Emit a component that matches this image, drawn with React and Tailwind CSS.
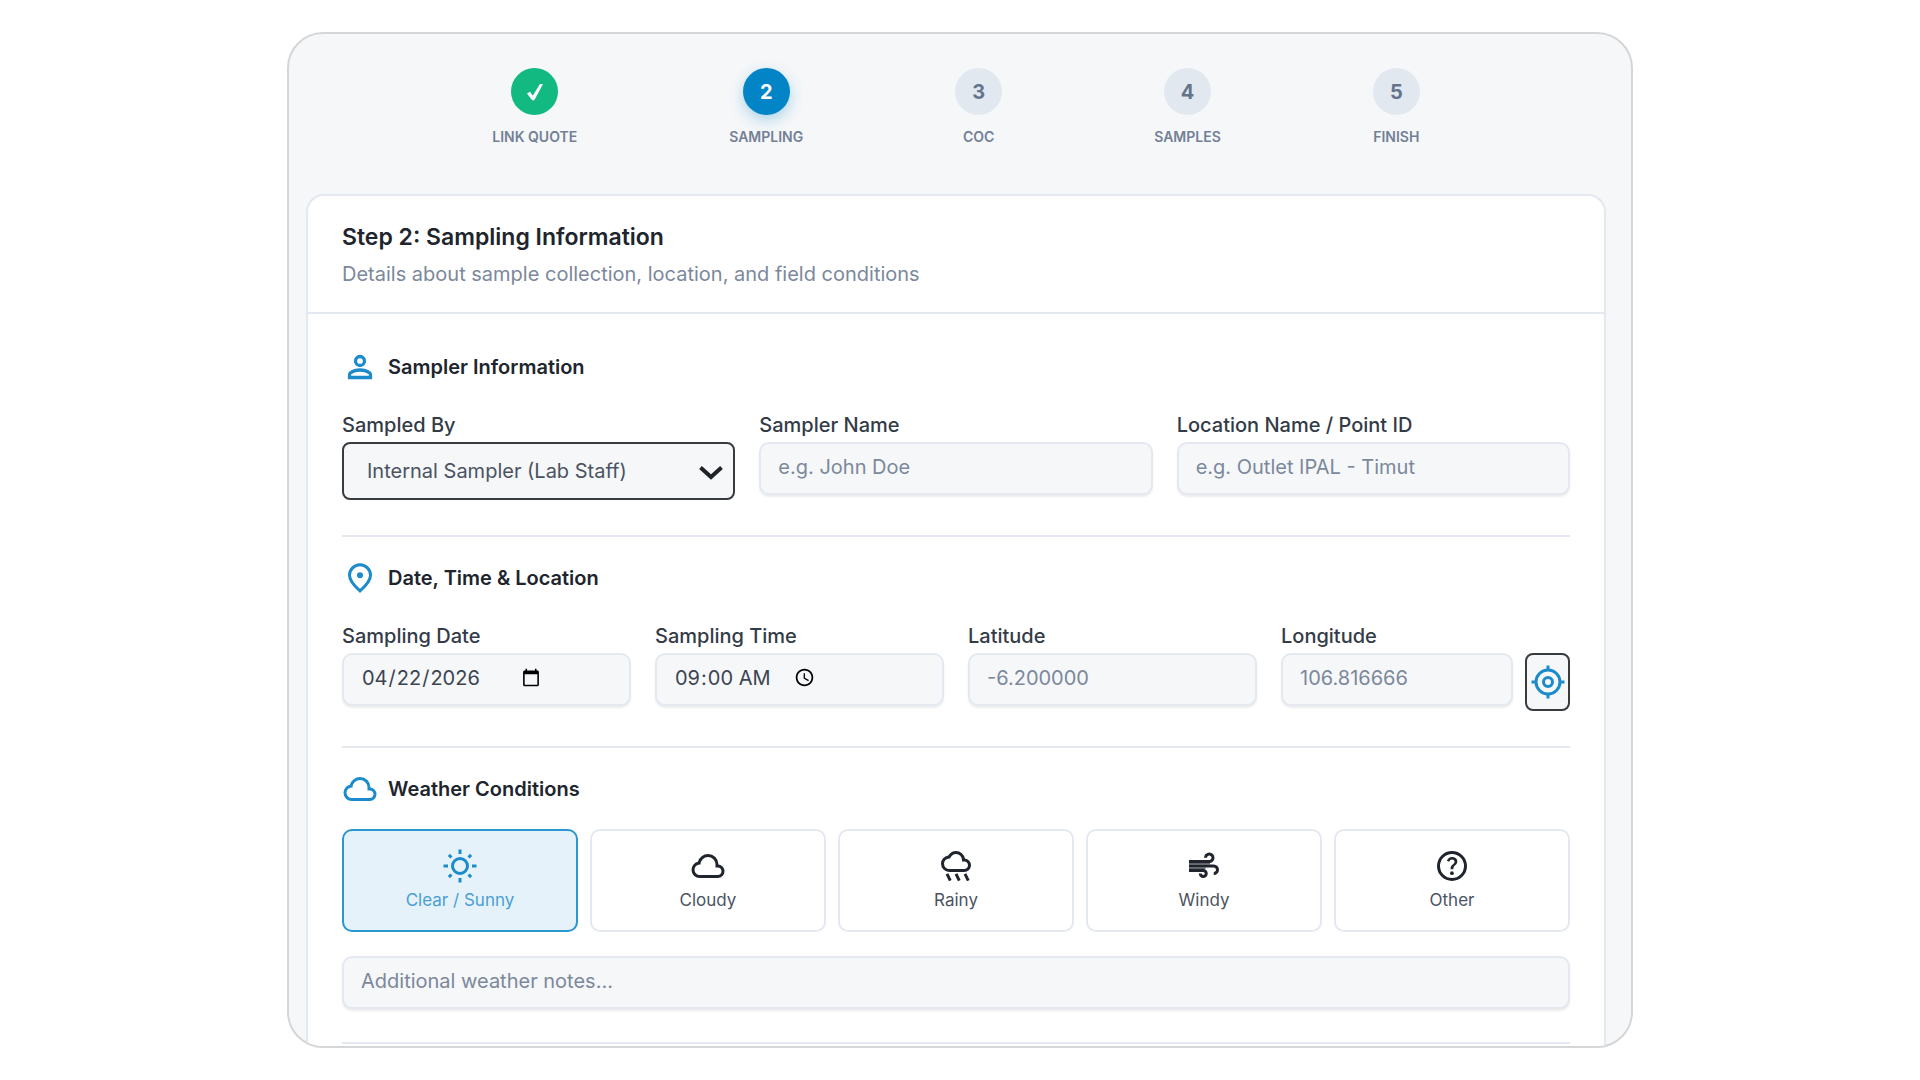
import { useState } from 'react'
import clsx from 'clsx'

const STEPS = [
  { id: 1, label: 'Link Quote', status: 'done' },
  { id: 2, label: 'Sampling', status: 'active' },
  { id: 3, label: 'COC', status: 'todo' },
  { id: 4, label: 'Samples', status: 'todo' },
  { id: 5, label: 'Finish', status: 'todo' },
]

const FIELD =
  'w-full h-[53px] rounded-[10px] border-2 border-[#e4e9f1] bg-[#f5f7f9] px-[17px] pb-1 text-xl text-[#3c4451] shadow-[0_2px_2px_rgba(0,0,0,0.08)] outline-none placeholder:text-[#7c889b] placeholder:opacity-100'

/* Icons */

function Icon({ children }) {
  return (
    <svg viewBox="0 0 24 24" className="size-9 shrink-0" fill="currentColor" aria-hidden="true">
      {children}
    </svg>
  )
}

const PersonIcon = () => (
  <Icon>
    <g fill="none" stroke="currentColor" strokeWidth="2.2">
      <circle cx="12" cy="8" r="3" />
      <path d="M5 19v-1.8c0-.6.3-1.1.8-1.4C7.5 14.6 9.7 14 12 14s4.5.6 6.2 1.8c.5.3.8.8.8 1.4V19z" />
    </g>
  </Icon>
)

const PinIcon = () => (
  <Icon>
    <path
      d="M12 20.6c-4.7-4.1-7-7.6-7-10.4a7 7 0 0 1 14 0c0 2.8-2.3 6.3-7 10.4z"
      fill="none"
      stroke="currentColor"
      strokeWidth="2"
    />
    <circle cx="12" cy="10.2" r="2" />
  </Icon>
)

const CloudIcon = () => (
  <Icon>
    <path
      fillRule="evenodd"
      d="M6.5 20Q4.22 20 2.61 18.43 1 16.85 1 14.58 1 12.63 2.17 11.1 3.35 9.57 5.25 9.15 5.88 6.85 7.75 5.43 9.63 4 12 4 14.93 4 16.96 6.04 19 8.07 19 11 20.73 11.2 21.86 12.5 23 13.78 23 15.5 23 17.38 21.69 18.69 20.38 20 18.5 20ZM6.5 18H18.5Q19.55 18 20.27 17.27 21 16.55 21 15.5 21 14.45 20.27 13.73 19.55 13 18.5 13H17V11Q17 8.93 15.54 7.46 14.07 6 12 6 9.93 6 8.46 7.46 7 8.93 7 11H6.5Q5.05 11 4.03 12.03 3 13.05 3 14.5 3 15.95 4.03 16.98 5.05 18 6.5 18Z"
    />
  </Icon>
)

const LocateIcon = () => (
  <Icon>
    <g fill="none" stroke="currentColor" strokeWidth="2">
      <circle cx="12" cy="12" r="8" />
      <circle cx="12" cy="12" r="3" />
      <path d="M12 1v3M12 20v3M1 12h3M20 12h3" />
    </g>
  </Icon>
)

const SunIcon = () => (
  <Icon>
    <g fill="none" stroke="currentColor" strokeWidth="2">
      <circle cx="12" cy="12" r="5" />
      <path d="M12 1v3M12 20v3M1 12h3M20 12h3M4.6 4.6l1.7 1.7M17.7 17.7l1.7 1.7M19.4 4.6l-1.7 1.7M6.3 17.7l-1.7 1.7" />
    </g>
  </Icon>
)

const RainIcon = () => (
  <Icon>
    <path
      fillRule="evenodd"
      d="M7.5 16Q5.23 16 3.61 14.39 2 12.78 2 10.5 2 8.43 3.38 6.88 4.75 5.33 6.78 5.05 7.58 3.63 8.96 2.81 10.35 2 12 2 14.25 2 15.91 3.44 17.58 4.88 17.93 7.03 19.65 7.18 20.83 8.45 22 9.73 22 11.5 22 13.38 20.69 14.69 19.38 16 17.5 16ZM7.5 14H17.5Q18.55 14 19.27 13.27 20 12.55 20 11.5 20 10.45 19.27 9.72 18.55 9 17.5 9H16V8Q16 6.35 14.83 5.17 13.65 4 12 4 10.8 4 9.81 4.65 8.83 5.3 8.33 6.4L8.08 7H7.45Q6.03 7.05 5.01 8.06 4 9.08 4 10.5 4 11.95 5.03 12.98 6.05 14 7.5 14Z"
    />
    <path d="M6 17.3l2.2 4.4M12 17.3l2.2 4.4M18 17.3l2.2 4.4" stroke="currentColor" strokeWidth="2" />
  </Icon>
)

const WindIcon = () => (
  <Icon>
    <path d="M11.5 20q-1.25 0-2.125-.875T8.5 17h2q0 .425.288.713T11.5 18t.713-.288T12.5 17t-.288-.713T11.5 16H2v-2h9.5q1.25 0 2.125.875T14.5 17t-.875 2.125T11.5 20M2 10V8h13.5q.65 0 1.075-.425T17 6.5t-.425-1.075T15.5 5t-1.075.425T14 6.5h-2q0-1.475 1.013-2.488T15.5 3t2.488 1.013T19 6.5t-1.013 2.488T15.5 10zm16.5 8v-2q.65 0 1.075-.425T20 14.5t-.425-1.075T18.5 13H2v-2h16.5q1.475 0 2.488 1.013T22 14.5t-1.013 2.488T18.5 18" />
    <path d="M2 10h14v1H2zM2 13h11v1H2z" opacity="0.7" />
  </Icon>
)

const HelpIcon = () => (
  <Icon>
    <circle cx="12" cy="12" r="9" fill="none" stroke="currentColor" strokeWidth="2" />
    <circle cx="11.95" cy="16.75" r="1.25" />
    <path d="M11.05 14.15h1.85q0-.825.188-1.3t1.062-1.3q.65-.65 1.025-1.238T15.55 8.9q0-1.4-1.025-2.15T12.1 6q-1.425 0-2.313.75T8.55 8.55l1.65.65q.125-.45.563-.975T12.1 7.7q.8 0 1.2.438t.4.962q0 .5-.3.938t-.75.812q-1.1.975-1.35 1.475t-.25 1.825" />
  </Icon>
)

const WEATHER = [
  { id: 'clear', label: 'Clear / Sunny', icon: SunIcon },
  { id: 'cloudy', label: 'Cloudy', icon: CloudIcon },
  { id: 'rainy', label: 'Rainy', icon: RainIcon },
  { id: 'windy', label: 'Windy', icon: WindIcon },
  { id: 'other', label: 'Other', icon: HelpIcon },
]

/* Building blocks */

function Step({ id, label, status }) {
  return (
    <li className="flex flex-col items-center gap-3">
      <span
        className={clsx(
          'flex size-[47px] items-center justify-center rounded-full text-xl font-bold',
          status === 'done' && 'bg-[#12b981] text-white',
          status === 'active' && 'bg-[#0284c7] text-white shadow-[0_5px_14px_rgba(2,132,199,0.3)]',
          status === 'todo' && 'bg-[#e2e8f0] text-[#64748b]',
        )}
      >
        {status === 'done' ? (
          <svg viewBox="0 0 18 18" className="size-[18px]" fill="currentColor" aria-label="Completed">
            <path d="M1 10.5l3-1.7 2.8 3.9L13.9 1H17L8.3 17.3H6.2z" />
          </svg>
        ) : (
          id
        )}
      </span>
      <span className="text-sm leading-5 font-semibold text-[#738096] uppercase">{label}</span>
    </li>
  )
}

function SectionTitle({ icon: SectionIcon, children }) {
  return (
    <h2 className="flex h-8 items-center gap-2.5 text-xl font-semibold text-[#20252d]">
      <span className="text-[#1c8bcb]">
        <SectionIcon />
      </span>
      {children}
    </h2>
  )
}

function Field({ id, label, children }) {
  return (
    <div className="min-w-0">
      <label htmlFor={id} className="mb-[3px] block text-xl leading-7 font-medium text-[#333b47]">
        {label}
      </label>
      {children}
    </div>
  )
}

export default function App() {
  const [weather, setWeather] = useState('clear')

  return (
    <div className="bg-white px-6 py-8 font-['Inter','Liberation_Sans',sans-serif]">
      <main className="mx-auto max-w-[1346px] overflow-hidden rounded-[36px] border-2 border-[#d5d6d7] bg-[#f5f7f9] pt-[34px] pr-[25px] pl-[17px]">
        <ol className="mb-[47px] flex justify-center gap-[152px]">
          {STEPS.map((step) => (
            <Step key={step.id} {...step} />
          ))}
        </ol>

        <form className="rounded-t-[18px] border-2 border-b-0 border-[#e4e9f1] bg-white">
          <header className="border-b-2 border-[#e4e9f1] px-[34px] pt-[25px] pb-6">
            <h1 className="text-[23px] leading-8 font-semibold text-[#20252d]">Step 2: Sampling Information</h1>
            <p className="mt-[7px] text-xl leading-7 text-[#7c889b]">
              Details about sample collection, location, and field conditions
            </p>
          </header>

          <div className="px-[34px] pt-[37px] pb-0.5">
            {/* Sampler */}
            <section className="border-b-2 border-[#e4e9f1] pb-[35px]">
              <SectionTitle icon={PersonIcon}>Sampler Information</SectionTitle>
              <div className="mt-7 grid grid-cols-3 gap-6">
                <Field id="sampled-by" label="Sampled By">
                  <div className="relative">
                    <select
                      id="sampled-by"
                      className="h-[58px] w-full appearance-none rounded-lg border-2 border-[#383b3f] bg-[#f5f7f9] px-[23px] text-xl text-[#4b5361] outline-none"
                    >
                      <option>Internal Sampler (Lab Staff)</option>
                      <option>Client Sampler</option>
                    </select>
                    <svg
                      viewBox="0 0 24 14"
                      className="pointer-events-none absolute top-6 right-3 h-3.5 w-6 text-[#1f2327]"
                      fill="none"
                      stroke="currentColor"
                      strokeWidth="4"
                      aria-hidden="true"
                    >
                      <path d="M1.5 1.5L12 11l10.5-9.5" />
                    </svg>
                  </div>
                </Field>
                <Field id="sampler-name" label="Sampler Name">
                  <input id="sampler-name" type="text" placeholder="e.g. John Doe" className={FIELD} />
                </Field>
                <Field id="location-name" label="Location Name / Point ID">
                  <input id="location-name" type="text" placeholder="e.g. Outlet IPAL - Timut" className={FIELD} />
                </Field>
              </div>
            </section>

            {/* Date, time and coordinates */}
            <section className="border-b-2 border-[#e4e9f1] pt-[25px] pb-[35px]">
              <SectionTitle icon={PinIcon}>Date, Time &amp; Location</SectionTitle>
              <div className="mt-7 grid grid-cols-4 gap-6">
                <Field id="sampling-date" label="Sampling Date">
                  <div className={FIELD}>
                    <input
                      id="sampling-date"
                      type="date"
                      defaultValue="2026-04-22"
                      className="h-full w-[182px] outline-none"
                    />
                  </div>
                </Field>
                <Field id="sampling-time" label="Sampling Time">
                  <div className={FIELD}>
                    <input
                      id="sampling-time"
                      type="time"
                      defaultValue="09:00"
                      className="h-full w-[144px] outline-none"
                    />
                  </div>
                </Field>
                <Field id="latitude" label="Latitude">
                  <input id="latitude" type="text" placeholder="-6.200000" className={FIELD} />
                </Field>
                <Field id="longitude" label="Longitude">
                  <div className="flex items-start gap-3">
                    <input
                      id="longitude"
                      type="text"
                      placeholder="106.816666"
                      className={clsx(FIELD, 'min-w-0 flex-1')}
                    />
                    <button
                      type="button"
                      aria-label="Use my location"
                      className="flex h-[58px] w-[45px] shrink-0 items-center justify-center rounded-lg border-2 border-[#383b3f] bg-[#f5f7f9] text-[#1c8bcb]"
                    >
                      <LocateIcon />
                    </button>
                  </div>
                </Field>
              </div>
            </section>

            {/* Weather */}
            <section className="border-b-2 border-[#e4e9f1] pt-[25px] pb-[33px]">
              <SectionTitle icon={CloudIcon}>Weather Conditions</SectionTitle>
              <div className="mt-6 grid grid-cols-5 gap-3">
                {WEATHER.map(({ id, label, icon: WeatherIcon }) => (
                  <button
                    key={id}
                    type="button"
                    aria-pressed={weather === id}
                    onClick={() => setWeather(id)}
                    className={clsx(
                      'flex h-[103px] flex-col items-center rounded-[10px] border-2 pt-[17px] text-[17px] leading-6',
                      weather === id
                        ? 'border-[#2b97d1] bg-[#e5f2fa] text-[#1c8bcb]'
                        : 'border-[#e4e9f1] bg-white text-[#20252d]',
                    )}
                  >
                    <WeatherIcon />
                    <span className={clsx('mt-1', weather === id ? 'text-[#4a9fd3]' : 'text-[#4b5361]')}>{label}</span>
                  </button>
                ))}
              </div>
              <input
                type="text"
                aria-label="Additional weather notes"
                placeholder="Additional weather notes..."
                className={clsx(FIELD, 'mt-6')}
              />
            </section>
          </div>
        </form>
      </main>
    </div>
  )
}
